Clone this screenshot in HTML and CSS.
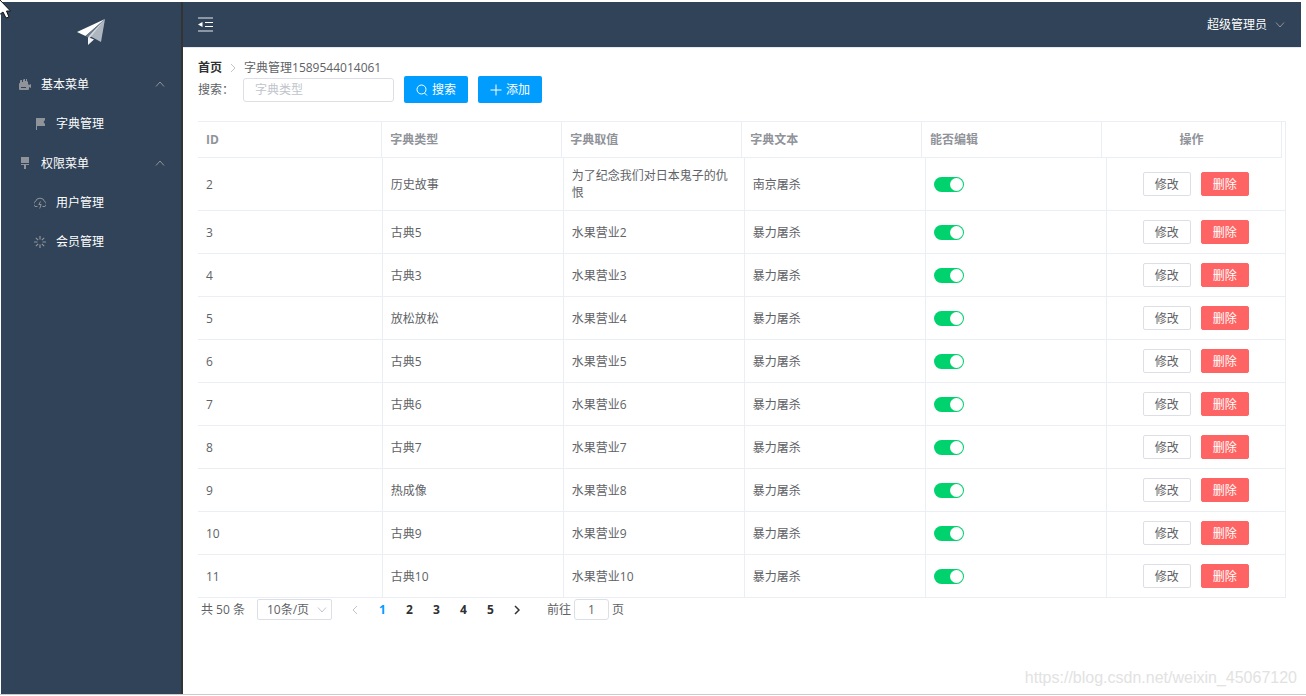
FILE: index.html
```html
<!DOCTYPE html>
<html lang="zh-CN">
<head>
<meta charset="utf-8">
<title>字典管理</title>
<link rel="stylesheet" href="styles.css">
</head>
<body>
<svg class="cursor" viewBox="0 0 11 19" aria-hidden="true"><path d="M-1-1V15L3 12L6 18L9 17L6.500 11H10.500L-1-1Z" fill="#fff" stroke="#111" stroke-width="1"/></svg>
<div class="layout">
  <aside class="sidebar">
    <div class="logo">
      <svg width="30" height="28" viewBox="0 0 30 28" aria-hidden="true"><path d="M29 1L1 14L9.500 18Z" fill="#fff"/><path d="M29 1L13 17.500L25 24Z" fill="#aeb6c0"/><path d="M29 1L9.500 18L12 19.500Z" fill="#6d7a8a"/><path d="M12 19V27L18 21.500Z" fill="#f2f4f6"/><path d="M29 1L12.500 18.500L13 21Z" fill="#d5dade"/></svg>
    </div>
    <nav class="menu">
      <button class="group" type="button">
        <svg class="icon" viewBox="0 0 12 12"><path fill="currentColor" fill-rule="evenodd" d="M0 6Q0 5 1 5V3Q1 2 2 2H3V4H4V2L5 1H6V3H7V1H8V3L9 4V6L10 7L12 6V10L10 9V11Q10 12 9 12H1Q0 12 0 11ZM2 9V10H7V9Z"/></svg>
        <span>基本菜单</span>
        <svg class="arrow" viewBox="0 0 10 6"><path d="M1 5.500L5 1L9 5.500"/></svg>
      </button>
      <a class="item" href="#dict"><svg class="icon" viewBox="0 0 12 12"><path fill="currentColor" d="M2 0H11V2L9.500 4L11 6V8H3V12H2Z"/></svg><span>字典管理</span></a>
      <button class="group" type="button">
        <svg class="icon" viewBox="0 0 12 12"><path fill="currentColor" d="M2 0H10V6H2ZM2 7H10V8H7V12H5V8H2Z"/></svg>
        <span>权限菜单</span>
        <svg class="arrow" viewBox="0 0 10 6"><path d="M1 5.500L5 1L9 5.500"/></svg>
      </button>
      <a class="item" href="#users"><svg class="icon" viewBox="0 0 12 12"><path fill="none" stroke="currentColor" d="M3.500 9.500H3A2.600 2.600 0 0 1 1.500 4.500A4.600 4.200 0 0 1 10.500 4.500A2.600 2.600 0 0 1 9 9.500H8.500M6.500 4.500L4.800 7.500H7.200L5.700 11.500"/></svg><span>用户管理</span></a>
      <a class="item" href="#members"><svg class="icon" viewBox="0 0 12 12"><path fill="none" stroke="currentColor" stroke-width="1.200" d="M6 0V3.500M6 8.500V12M0 6H3.500M8.500 6H12M1.800 1.800L4.200 4.200M7.800 7.800L10.200 10.200M10.200 1.800L7.800 4.200M4.200 7.800L1.800 10.200"/></svg><span>会员管理</span></a>
    </nav>
  </aside>
  <div class="main">
    <header class="topbar">
      <button class="fold" type="button" aria-label="折叠菜单"><svg width="15" height="15" viewBox="0 0 15 15"><path d="M0 1H15M0 14H15" stroke="#aab3be" stroke-width="1.300"/><path d="M7 5.500H15M7 9.500H15" stroke="#fff"/><path d="M0 7.500L4.500 5V10Z" fill="#fff"/></svg></button>
      <button class="user" type="button"><span>超级管理员</span><svg class="arrow" viewBox="0 0 10 6"><path d="M1 .5L5 5L9 .5"/></svg></button>
    </header>
    <main class="content">
      <nav class="crumbs"><a href="#home">首页</a><svg width="6" height="10" viewBox="0 0 6 10"><path d="M1 1L5 5L1 9" fill="none" stroke="#c0c4cc"/></svg><span>字典管理1589544014061</span></nav>
      <form class="search">
        <label for="kw">搜索：</label>
        <input id="kw" type="text" placeholder="字典类型">
        <button class="primary" type="button"><svg viewBox="0 0 12 12"><circle cx="5.500" cy="5.500" r="4.500"/><path d="M8.500 9L11 11.500"/></svg>搜索</button>
        <button class="primary" type="button"><svg viewBox="0 0 12 12"><path d="M6 .5V11.500M.5 6H11.500"/></svg>添加</button>
      </form>
      <section class="grid">
        <table class="head">
          <colgroup><col class="first"><col><col><col><col><col></colgroup>
          <thead><tr><th>ID</th><th>字典类型</th><th>字典取值</th><th>字典文本</th><th>能否编辑</th><th class="ops">操作</th></tr></thead>
        </table>
        <table class="rows">
          <colgroup><col class="first"><col class="mid"><col class="mid"><col class="mid"><col class="mid"><col></colgroup>
          <tbody>
            <tr><td>2</td><td>历史故事</td><td>为了纪念我们对日本鬼子的仇恨</td><td>南京屠杀</td><td><input class="switch" type="checkbox" aria-label="能否编辑" checked></td><td class="ops"><div><button type="button">修改</button><button class="danger" type="button">删除</button></div></td></tr>
            <tr><td>3</td><td>古典5</td><td>水果营业2</td><td>暴力屠杀</td><td><input class="switch" type="checkbox" aria-label="能否编辑" checked></td><td class="ops"><div><button type="button">修改</button><button class="danger" type="button">删除</button></div></td></tr>
            <tr><td>4</td><td>古典3</td><td>水果营业3</td><td>暴力屠杀</td><td><input class="switch" type="checkbox" aria-label="能否编辑" checked></td><td class="ops"><div><button type="button">修改</button><button class="danger" type="button">删除</button></div></td></tr>
            <tr><td>5</td><td>放松放松</td><td>水果营业4</td><td>暴力屠杀</td><td><input class="switch" type="checkbox" aria-label="能否编辑" checked></td><td class="ops"><div><button type="button">修改</button><button class="danger" type="button">删除</button></div></td></tr>
            <tr><td>6</td><td>古典5</td><td>水果营业5</td><td>暴力屠杀</td><td><input class="switch" type="checkbox" aria-label="能否编辑" checked></td><td class="ops"><div><button type="button">修改</button><button class="danger" type="button">删除</button></div></td></tr>
            <tr><td>7</td><td>古典6</td><td>水果营业6</td><td>暴力屠杀</td><td><input class="switch" type="checkbox" aria-label="能否编辑" checked></td><td class="ops"><div><button type="button">修改</button><button class="danger" type="button">删除</button></div></td></tr>
            <tr><td>8</td><td>古典7</td><td>水果营业7</td><td>暴力屠杀</td><td><input class="switch" type="checkbox" aria-label="能否编辑" checked></td><td class="ops"><div><button type="button">修改</button><button class="danger" type="button">删除</button></div></td></tr>
            <tr><td>9</td><td>热成像</td><td>水果营业8</td><td>暴力屠杀</td><td><input class="switch" type="checkbox" aria-label="能否编辑" checked></td><td class="ops"><div><button type="button">修改</button><button class="danger" type="button">删除</button></div></td></tr>
            <tr><td>10</td><td>古典9</td><td>水果营业9</td><td>暴力屠杀</td><td><input class="switch" type="checkbox" aria-label="能否编辑" checked></td><td class="ops"><div><button type="button">修改</button><button class="danger" type="button">删除</button></div></td></tr>
            <tr><td>11</td><td>古典10</td><td>水果营业10</td><td>暴力屠杀</td><td><input class="switch" type="checkbox" aria-label="能否编辑" checked></td><td class="ops"><div><button type="button">修改</button><button class="danger" type="button">删除</button></div></td></tr>
          </tbody>
        </table>
      </section>
      <div class="pager">
        <span>共 50 条</span>
        <div class="size"><select aria-label="每页条数"><option>10条/页</option></select><svg class="arrow" viewBox="0 0 10 6"><path d="M1 .5L5 5L9 .5"/></svg></div>
        <div class="pages">
          <button type="button" aria-label="上一页" disabled><svg width="6" height="10" viewBox="0 0 6 10"><path d="M5 1L1 5L5 9" fill="none" stroke="#c0c4cc"/></svg></button>
          <button class="current" type="button">1</button><button type="button">2</button><button type="button">3</button><button type="button">4</button><button type="button">5</button>
          <button type="button" aria-label="下一页"><svg width="6" height="10" viewBox="0 0 6 10"><path d="M1 1L5 5L1 9" fill="none" stroke="#303133" stroke-width="1.500"/></svg></button>
        </div>
        <label class="jump">前往<input type="text" value="1">页</label>
      </div>
    </main>
  </div>
</div>
<div class="watermark">https://blog.csdn.net/weixin_45067120</div>
</body>
</html>
```

FILE: styles.css
```css
* { box-sizing: border-box; }
body {
  margin: 0;
  position: relative;
  min-height: 100vh;
  padding-top: 2px;
  display: flex;
  flex-direction: column;
  background: #fff;
  color: #606266;
  font: 12px/17px "Open Sans", "Noto Sans CJK SC", sans-serif;
}
button, input, select { font: inherit; color: inherit; }
button { padding: 0; border: 0; background: none; cursor: pointer; }
a { color: inherit; text-decoration: none; }
svg { display: block; flex: none; }
.cursor { position: absolute; left: 0; top: 0; width: 11px; height: 19px; z-index: 2; }
.layout {
  flex: 1;
  display: flex;
  padding: 0 5px 0 1px;
  border-bottom: 1px solid #ccc;
  margin-bottom: 1px;
}
.sidebar {
  flex: none;
  width: 182px;
  background: #304358;
  border-right: 2px solid #333;
  color: #fff;
}
.logo { display: flex; justify-content: center; padding: 16px 0 18px; }
.menu { display: flex; flex-direction: column; }
.group, .item { display: flex; align-items: center; }
.group { height: 40px; padding: 0 16px 0 18px; gap: 10px; text-align: left; }
.group span { flex: 1; }
.item { height: 39px; padding-left: 33px; gap: 10px; }
.icon { width: 12px; height: 12px; color: #909399; }
.arrow { width: 10px; height: 6px; fill: none; stroke: #909399; }
.main { flex: 1; min-width: 0; }
.topbar {
  height: 46px;
  display: flex;
  align-items: center;
  justify-content: space-between;
  padding: 0 16px 0 15px;
  background: #304358;
  border-bottom: 1px solid #e6e9f0;
  color: #fff;
}
.user { display: flex; align-items: center; gap: 8px; }
.content { padding: 11px 15px; }
.crumbs { display: flex; align-items: center; gap: 8px; }
.crumbs a { font-weight: 700; color: #303133; }
.search { display: flex; align-items: center; gap: 10px; margin-bottom: 18px; }
.search label { width: 35px; white-space: nowrap; }
.search input {
  width: 151px;
  height: 24px;
  padding: 0 11px;
  border: 1px solid #dcdfe6;
  border-radius: 3px;
}
.search input::placeholder { color: #c0c4cc; }
.primary {
  width: 64px;
  height: 27px;
  display: flex;
  align-items: center;
  justify-content: center;
  gap: 4px;
  border-radius: 2px;
  background: #009dff;
  color: #fff;
}
.primary svg { width: 12px; height: 12px; fill: none; stroke: #fff; }
.grid { border-top: 1px solid #ebeef5; border-right: 1px solid #ebeef5; }
table { table-layout: fixed; border-collapse: separate; border-spacing: 0; width: 100%; }
.head { width: calc(100% - 3px); }
.first { width: 17%; }
.mid { width: 16.65%; }
th, td { padding: 0 8px; border-right: 1px solid #ebeef5; border-bottom: 1px solid #ebeef5; text-align: left; }
th { height: 36px; color: #909399; font-weight: 700; }
td { padding: 9px 8px; }
.rows td:last-child { border-right: 0; }
.ops { text-align: center; }
.ops div { display: flex; justify-content: center; gap: 10px; }
.ops button { width: 48px; height: 24px; border: 1px solid #dcdfe6; border-radius: 2px; background: #fff; }
.ops .danger { border-color: #ff6464; background: #ff6464; color: #fff; }
.switch {
  appearance: none;
  display: flex;
  align-items: center;
  justify-content: flex-end;
  width: 30px;
  height: 15px;
  margin: 0;
  padding-right: 1px;
  border-radius: 8px;
  background: #00d26e;
}
.switch::before { content: ""; width: 13px; height: 13px; border-radius: 50%; background: #fff; }
.switch:not(:checked) { justify-content: flex-start; padding-left: 1px; background: #dcdfe6; }
.pager { display: flex; align-items: center; padding: 1px 3px; }
.size { display: flex; align-items: center; margin-left: 12px; }
.size select {
  appearance: none;
  width: 75px;
  height: 21px;
  padding: 0 9px;
  border: 1px solid #dcdfe6;
  border-radius: 2px;
  background: #fff;
}
.size .arrow { margin-left: -15px; margin-right: 5px; stroke: #c0c4cc; pointer-events: none; }
.pages { display: flex; margin-left: 10px; }
.pages button { width: 27px; height: 21px; display: flex; align-items: center; justify-content: center; color: #303133; font-weight: 700; }
.pages .current { color: #009dff; }
.jump { display: flex; align-items: center; gap: 3px; margin-left: 16px; }
.jump input { width: 35px; height: 21px; padding: 0; border: 1px solid #dcdfe6; border-radius: 3px; text-align: center; }
.watermark {
  position: absolute;
  right: 9px;
  bottom: 8px;
  color: #e2e2e2;
  font: 16px/20px "Liberation Sans", Arial, sans-serif;
}
```
